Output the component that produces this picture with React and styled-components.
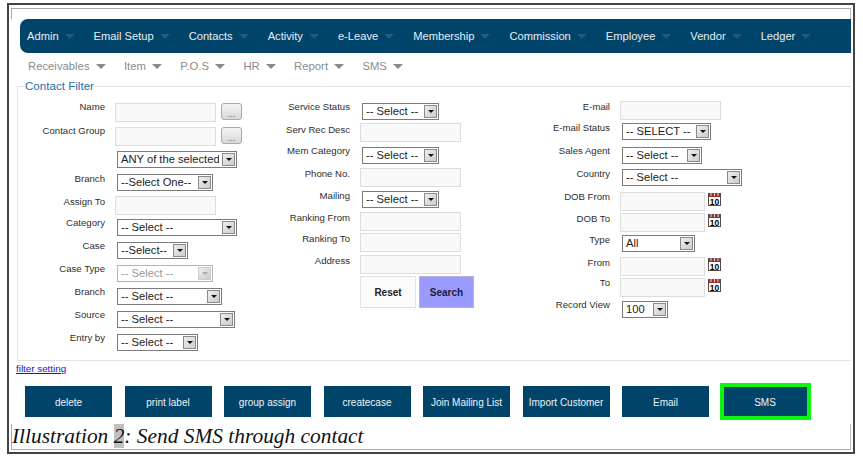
import styled, { createGlobalStyle } from "styled-components";

const mainMenu = ["Admin", "Email Setup", "Contacts", "Activity", "e-Leave", "Membership", "Commission", "Employee", "Vendor", "Ledger"];
const subMenu = ["Receivables", "Item", "P.O.S", "HR", "Report", "SMS"];
const actions = ["delete", "print label", "group assign", "createcase", "Join Mailing List", "Import Customer", "Email"];

const leftFields = [
  { label: "Name", pitch: 24, dy: 4, browse: true },
  { label: "Contact Group", pitch: 24, dy: 4, browse: true },
  { pitch: 23, dy: 4, select: "ANY of the selected", w: 120 },
  { label: "Branch", pitch: 22, dy: 5, select: "--Select One--", w: 96 },
  { label: "Assign To", pitch: 23, dy: 6 },
  { label: "Category", pitch: 23, dy: 4, select: "-- Select --", w: 120 },
  { label: "Case", pitch: 23, dy: 4, select: "--Select--", w: 71 },
  { label: "Case Type", pitch: 23, dy: 4, select: "-- Select --", w: 96, disabled: true },
  { label: "Branch", pitch: 23, dy: 4, select: "-- Select --", w: 105 },
  { label: "Source", pitch: 23, dy: 4, select: "-- Select --", w: 118 },
  { label: "Entry by", pitch: 18, dy: 4, select: "-- Select --", w: 81 },
];

const middleFields = [
  { label: "Service Status", pitch: 20, dy: 4, select: "-- Select --", w: 77 },
  { label: "Serv Rec Desc", pitch: 24, dy: 7 },
  { label: "Mem Category", pitch: 21, dy: 4, select: "-- Select --", w: 77 },
  { label: "Phone No.", pitch: 23, dy: 6 },
  { label: "Mailing", pitch: 21, dy: 5, select: "-- Select --", w: 77 },
  { label: "Ranking From", pitch: 21, dy: 6 },
  { label: "Ranking To", pitch: 22, dy: 6 },
  { label: "Address", pitch: 21, dy: 6 },
];

const rightFields = [
  { label: "E-mail", pitch: 22, dy: 6 },
  { label: "E-mail Status", pitch: 24, dy: 5, select: "-- SELECT --", w: 89 },
  { label: "Sales Agent", pitch: 22, dy: 4, select: "-- Select --", w: 80 },
  { label: "Country", pitch: 23, dy: 5, select: "-- Select --", w: 120 },
  { label: "DOB From", pitch: 21, dy: 5, date: true },
  { label: "DOB To", pitch: 22, dy: 6, date: true },
  { label: "Type", pitch: 22, dy: 5, select: "All", w: 73 },
  { label: "From", pitch: 21, dy: 6, date: true },
  { label: "To", pitch: 23, dy: 5, date: true },
  { label: "Record View", pitch: 18, dy: 4, select: "100", w: 46 },
];

function CalendarIcon() {
  return (
    <CalendarSvg viewBox="0 0 13 14" width="13" height="14">
      <rect x="0.5" y="1.5" width="12" height="12" fill="#fff" stroke="#5a4a44" />
      <rect x="1" y="2" width="11" height="3" fill="#a52a2e" />
      <path d="M3 1v3M6.5 1v3M10 1v3" stroke="#e8d8d8" strokeWidth="1" />
      <text x="6.5" y="12.8" textAnchor="middle" fontSize="8.5" fontWeight="700" fontFamily="Liberation Sans, sans-serif" fill="#000">
        10
      </text>
    </CalendarSvg>
  );
}

function Dropdown({ text, w, disabled }) {
  return (
    <SelectBox $w={w} $disabled={disabled}>
      <SelectText>{text}</SelectText>
      <SelectArrow $disabled={disabled} />
    </SelectBox>
  );
}

function Field({ field, labelWidth }) {
  return (
    <Row $pitch={field.pitch}>
      <Label $width={labelWidth} $dy={field.dy}>
        {field.label}
      </Label>
      {field.select ? (
        <Dropdown text={field.select} w={field.w} disabled={field.disabled} />
      ) : (
        <TextInput $w={field.date ? 85 : 101} />
      )}
      {field.browse && <BrowseButton>...</BrowseButton>}
      {field.date && <CalendarIcon />}
    </Row>
  );
}

export default function App() {
  return (
    <>
      <GlobalStyle />
      <Frame>
        <Sheet>
          <Content>
            <MainNav>
              {mainMenu.map((item) => (
                <MainItem key={item}>
                  {item}
                  <Caret $color="#26597a" $after={19} />
                </MainItem>
              ))}
            </MainNav>
            <SubNav>
              {subMenu.map((item) => (
                <SubItem key={item}>
                  {item}
                  <Caret $color="#8a8a8a" $after={18.4} />
                </SubItem>
              ))}
            </SubNav>
            <Filter>
              <FilterTitle>Contact Filter</FilterTitle>
              <FilterGrid>
                <Column $top={2}>
                  {leftFields.map((f, i) => (
                    <Field key={i} field={f} labelWidth={87} />
                  ))}
                </Column>
                <Column $top={2}>
                  {middleFields.map((f, i) => (
                    <Field key={i} field={f} labelWidth={70} />
                  ))}
                  <FormButtons>
                    <ResetButton>Reset</ResetButton>
                    <SearchButton>Search</SearchButton>
                  </FormButtons>
                </Column>
                <Column $top={0}>
                  {rightFields.map((f, i) => (
                    <Field key={i} field={f} labelWidth={80} />
                  ))}
                </Column>
              </FilterGrid>
            </Filter>
            <SettingLink href="#">filter setting</SettingLink>
            <Actions>
              {actions.map((item) => (
                <ActionButton key={item}>{item}</ActionButton>
              ))}
              <SmsButton>SMS</SmsButton>
            </Actions>
          </Content>
          <Caption>
            Illustration <CaptionNumber>2</CaptionNumber>: Send SMS through contact
          </Caption>
        </Sheet>
      </Frame>
    </>
  );
}

const GlobalStyle = createGlobalStyle`
  html, body {
    margin: 0;
    padding: 0;
    background: #fff;
    font-family: "Liberation Sans", Arial, sans-serif;
  }
  * {
    box-sizing: border-box;
  }
`;

const Frame = styled.div`
  width: 848px;
  height: 451px;
  margin: 3px 0 0 7px;
  padding: 3px 2px 2px 2px;
  border: 2px solid #444;
  background: #fff;
`;

const Sheet = styled.div`
  width: 840px;
  height: 442px;
  padding-top: 10px;
  border: 1px solid #aaa;
  border-right-color: #bbb;
`;

const Content = styled.div`
  width: 840px;
  height: 405px;
  margin: 0 -1px;
  background: #fff;
`;

const MainNav = styled.nav`
  display: flex;
  align-items: center;
  height: 34px;
  margin-left: 9px;
  padding-left: 7px;
  background: #01446a;
  border-radius: 8px 0 0 8px;
`;

const MainItem = styled.div`
  display: flex;
  align-items: center;
  color: #e6edf2;
  font-size: 11.15px;
  white-space: nowrap;
`;

const Caret = styled.span`
  width: 0;
  height: 0;
  margin: 1px ${(p) => p.$after}px 0 6px;
  border-left: 5px solid transparent;
  border-right: 5px solid transparent;
  border-top: 5px solid ${(p) => p.$color};
`;

const SubNav = styled.div`
  display: flex;
  align-items: center;
  height: 26px;
  padding-left: 17px;
`;

const SubItem = styled.div`
  display: flex;
  align-items: center;
  color: #8c8c8c;
  font-size: 11.3px;
  white-space: nowrap;
`;

const Filter = styled.fieldset`
  min-width: 0;
  margin: 0 0 0 6px;
  padding: 0;
  border: 1px solid #e2e2e2;
  border-right: none;
`;

const FilterTitle = styled.legend`
  margin-left: 7px;
  padding: 0 1px 0 0;
  color: #2b6ca8;
  font-size: 11.6px;
  line-height: 14px;
`;

const FilterGrid = styled.div`
  display: grid;
  grid-template-columns: 262px 250px 1fr;
  padding: 8px 0;
`;

const Column = styled.div`
  display: flex;
  flex-direction: column;
  padding-top: ${(p) => p.$top}px;
`;

const Row = styled.div`
  display: flex;
  align-items: flex-start;
  height: ${(p) => p.$pitch}px;
`;

const Label = styled.div`
  flex: none;
  width: ${(p) => p.$width}px;
  height: 12px;
  margin: ${(p) => p.$dy - 6}px 10px 0 0;
  color: #2e2e2e;
  font-size: 9.6px;
  line-height: 12px;
  text-align: right;
  white-space: nowrap;
`;

const TextInput = styled.input`
  flex: none;
  width: ${(p) => p.$w}px;
  height: 19px;
  padding: 0;
  background: #f9f9f9;
  border: 1px solid #ddd;
`;

const BrowseButton = styled.button`
  width: 21px;
  height: 17px;
  margin-left: 5px;
  padding: 4px 0 0;
  color: #666;
  font-size: 9px;
  line-height: 10px;
  background: linear-gradient(#f4f4f4, #d8d8d8);
  border: 1px solid #aaa;
  border-radius: 3px;
`;

const SelectBox = styled.div`
  flex: none;
  display: flex;
  width: ${(p) => p.$w}px;
  height: 17px;
  margin-left: 2px;
  padding: 1px;
  background: #fff;
  border: 1px solid ${(p) => (p.$disabled ? "#b5b5b5" : "#7b7b7b")};
  color: ${(p) => (p.$disabled ? "#999" : "#222")};
`;

const SelectText = styled.div`
  flex: 1;
  min-width: 0;
  margin-right: 3px;
  padding-left: 2px;
  overflow: hidden;
  font-size: 11.2px;
  line-height: 13px;
  white-space: nowrap;
`;

const SelectArrow = styled.div`
  flex: none;
  display: flex;
  align-items: center;
  justify-content: center;
  width: 13px;
  background: linear-gradient(135deg, #eee, #ccc);
  border: 1px solid ${(p) => (p.$disabled ? "#ccc" : "#8a8a8a")};

  &::after {
    content: "";
    border-left: 3px solid transparent;
    border-right: 3px solid transparent;
    border-top: 3px solid ${(p) => (p.$disabled ? "#aaa" : "#111")};
  }
`;

const CalendarSvg = styled.svg`
  flex: none;
  margin: 0 0 0 3px;
`;

const FormButtons = styled.div`
  display: flex;
  gap: 3px;
  margin: 0 0 0 80px;
`;

const ResetButton = styled.button`
  width: 56px;
  height: 32px;
  padding: 0;
  color: #222;
  font: bold 10px "Liberation Sans", sans-serif;
  background: #fbfbfb;
  border: 1px solid #e2e2e2;
`;

const SearchButton = styled(ResetButton)`
  width: 55px;
  color: #1c1c3c;
  background: #9a9aff;
  border-color: #b4b4d8;
`;

const SettingLink = styled.a`
  display: block;
  width: max-content;
  margin: 2px 0 11px 5px;
  color: #2211cc;
  font-size: 9.8px;
  line-height: 12px;
`;

const Actions = styled.div`
  display: flex;
  align-items: center;
  gap: 12.5px;
  margin-left: 14px;
`;

const ActionButton = styled.button`
  width: 87px;
  height: 31px;
  padding: 1px 0 0;
  color: #eef3f6;
  font: 10px "Liberation Sans", sans-serif;
  white-space: nowrap;
  background: #01446a;
  border: none;
`;

const SmsButton = styled(ActionButton)`
  width: 91px;
  height: 37px;
  margin: -3px -2px;
  border: 4px solid #0cf70c;
`;

const Caption = styled.div`
  color: #111;
  font: italic 21.4px/25px "Liberation Serif", serif;
  white-space: nowrap;
`;

const CaptionNumber = styled.span`
  background: #c0c0c0;
`;
